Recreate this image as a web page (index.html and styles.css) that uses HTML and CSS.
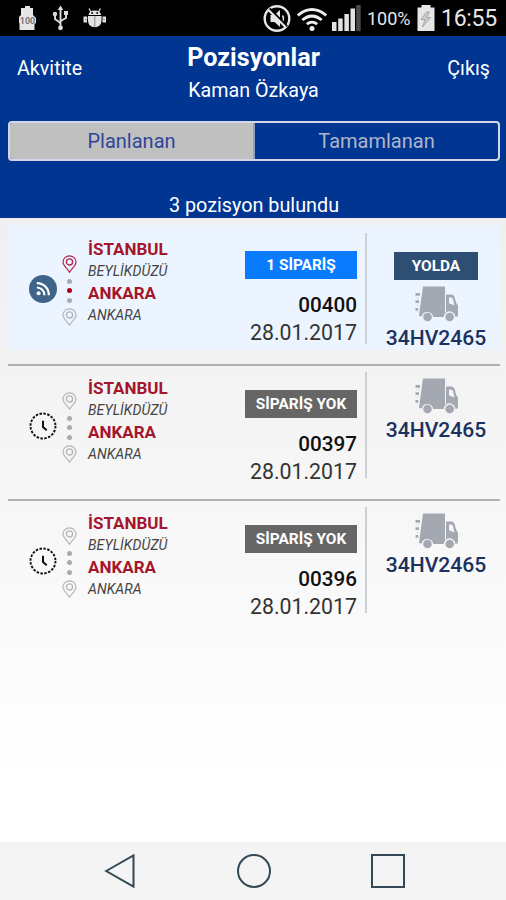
FILE: index.html
```html
<!DOCTYPE html>
<html lang="tr">
  <head>
    <meta charset="UTF-8" />
    <meta name="viewport" content="width=device-width, initial-scale=1.0" />
    <title>Pozisyonlar</title>
    <link rel="stylesheet" href="styles.css">
  </head>
  <body>
    <!-- shared icons -->
    <svg class="defs" width="0" height="0">
      <symbol id="pin" viewBox="0 0 15 18">
        <path d="M7.5 17.2 C5.5 13.5 1 10.8 1 6.9 C1 3.4 3.9 0.9 7.5 0.9 S14 3.4 14 6.9 C14 10.8 9.5 13.5 7.5 17.2 Z" fill="none" stroke="currentColor" stroke-width="1.2" />
        <circle cx="7.5" cy="6.9" r="3.1" fill="none" stroke="currentColor" stroke-width="1.3" />
      </symbol>
      <symbol id="truck" viewBox="0 0 43 36">
        <path d="M8 0.5 H30 V26.5 H31.2 Q28.8 28.5 28.8 31 H18.2 A5.8 5.8 0 0 0 6.8 30.4 L4 30 L5 22 Z" fill="currentColor" />
        <path fill-rule="evenodd" d="M31 8.5 H36.5 Q38.8 8.5 39.6 11 L41.2 17 L43 19.5 V28.5 Q43 31 40.4 31 A5.8 5.8 0 0 0 31 26.6 Z M34 11.5 V17.3 L39.4 19.6 L38 13 Q37.6 11.5 36 11.5 Z" fill="currentColor" />
        <circle cx="12.5" cy="31" r="4.3" fill="currentColor" />
        <circle cx="34.7" cy="31" r="4.3" fill="currentColor" />
        <path d="M0.5 8.3 H5 M0.5 15.6 H4 M0.5 23.3 H3.2" stroke="currentColor" stroke-width="2.8" />
        <path d="M1.5 11.9 H4 M1.5 19.5 H3.5" stroke="currentColor" stroke-width="1" opacity="0.35" />
      </symbol>
      <symbol id="clock" viewBox="0 0 28 28">
        <circle cx="14" cy="14" r="12.5" fill="none" stroke="#111" stroke-width="1.9" stroke-dasharray="2.5 1.427" />
        <path d="M14 8.7 V15 L17.7 18.2" fill="none" stroke="#111" stroke-width="2" />
      </symbol>
    </svg>

    <div class="status-bar">
      <svg class="notifications" width="90" height="36" viewBox="0 0 90 36">
        <path d="M4.5 8 H7 V6 H12 V8 H15 V15 L18 18 V23 L16.5 24 V30 H1.5 V24 L1 22 V17 L3 15 V8 Z" fill="#e6e6e6" />
        <text x="9.5" y="23.5" class="mini" text-anchor="middle">100</text>
        <g fill="none" stroke="#ddd" stroke-width="1.9">
          <path d="M42.5 8 V27" />
          <path d="M37 14 V19 L42.5 23 M48 13 V18 L42.5 21" />
        </g>
        <path d="M42.5 5.5 L45.3 10 H39.7 Z M46 11 H50 V15 H46 Z" fill="#ddd" />
        <circle cx="37" cy="14" r="2.2" fill="#ddd" />
        <circle cx="42.5" cy="27.8" r="2.4" fill="#ddd" />
        <path d="M71 8.5 L73 12 M82.5 8.5 L80.5 12" stroke="#ddd" stroke-width="1.3" />
        <path d="M70.5 15 Q71 10.5 76.8 10.5 T83 15 Z M70 16 H83.5 V21 Q83 27 76.8 27.3 Q70.5 27 70 21 Z M65.5 16.5 H69 V22.5 H65.5 Z M84.5 16.5 H88 V22.5 H84.5 Z" fill="#e2e2e2" />
        <path d="M76.8 16 V27 M70 18 L67 20 M83.5 18 L87 20" stroke="#888" stroke-width="1" />
        <circle cx="74.2" cy="13" r="0.9" fill="#000" />
        <circle cx="79.2" cy="13" r="0.9" fill="#000" />
      </svg>
      <div class="system">
        <svg width="100" height="36" viewBox="0 0 100 36">
          <circle cx="14" cy="18.5" r="12.3" fill="none" stroke="#e6e6e6" stroke-width="2.4" />
          <path d="M7.5 15 H11.5 L17 10 V27 L11.5 22 H7.5 Z" fill="#e6e6e6" />
          <path d="M19.5 15.5 Q21.5 18.5 19.5 21.5" fill="none" stroke="#e6e6e6" stroke-width="1.4" />
          <path d="M6.5 8.5 L24 26.5" stroke="#000" stroke-width="2.5" />
          <path d="M5.2 9.7 L22.7 27.3" stroke="#e6e6e6" stroke-width="2.2" />
          <g fill="none" stroke="#eee" stroke-width="2.8">
            <path d="M34.8 15.3 Q49 3.8 63.2 15.3" />
            <path d="M39.3 20 Q49 12 58.7 20" />
            <path d="M43.8 24.2 Q49 20 54.2 24.2" />
          </g>
          <circle cx="49" cy="28.5" r="2.5" fill="#eee" />
          <path d="M69 22 H73.5 V31 H69 Z M75.2 18.5 H79.7 V31 H75.2 Z M81.4 14 H85.9 V31 H81.4 Z M87.5 8.5 H92 V31 H87.5 Z" fill="#e2e2e2" />
          <path d="M93.2 5 H97.7 V31 H93.2 Z" fill="#4a4a4a" />
        </svg>
        <span class="percent">100%</span>
        <svg width="18" height="36" viewBox="0 0 18 36">
          <path d="M4.5 7.5 V5 H13.5 V7.5 H17.5 V31 H0.5 V7.5 Z" fill="#e6e6e6" />
          <path d="M9.5 12 L4 19.5 H8 L5.5 27 L13.5 17.5 H9.5 L12.5 12 Z" fill="#ccc" stroke="#999" stroke-width="0.8" />
        </svg>
        <span class="time">16:55</span>
      </div>
    </div>

    <header class="header">
      <nav>
        <a class="nav-left" href="#">Akvitite</a>
        <div class="title">
          <h1>Pozisyonlar</h1>
          <p>Kaman Özkaya</p>
        </div>
        <a class="nav-right" href="#">Çıkış</a>
      </nav>
      <div class="tabs">
        <div class="tab active"><span>Planlanan</span></div>
        <div class="tab"><span>Tamamlanan</span></div>
      </div>
      <div class="found"><span>3 pozisyon bulundu</span></div>
    </header>

    <main class="list">
      <section class="row current">
        <svg class="state" width="28" height="28" viewBox="0 0 28 28">
          <circle cx="14" cy="14" r="14" fill="#3f6489" />
          <circle cx="9.6" cy="18.3" r="2" fill="#fff" />
          <path d="M7.8 12.5 A7.5 7.5 0 0 1 15.4 20.2 M7.8 8.1 A11.8 11.8 0 0 1 19.8 20.2" fill="none" stroke="#fff" stroke-width="2.2" />
        </svg>
        <div class="track">
          <svg class="pin red" width="15" height="18"><use href="#pin" /></svg>
          <i class="dot"></i>
          <i class="dot red-dot"></i>
          <i class="dot"></i>
          <svg class="pin" width="15" height="18"><use href="#pin" /></svg>
        </div>
        <div class="route">
          <div class="city"><span>İSTANBUL</span></div>
          <div class="district"><span>BEYLİKDÜZÜ</span></div>
          <div class="city"><span>ANKARA</span></div>
          <div class="district"><span>ANKARA</span></div>
        </div>
        <div class="order">
          <div class="badge blue"><span>1 SİPARİŞ</span></div>
          <div class="number"><span>00400</span></div>
          <div class="date"><span>28.01.2017</span></div>
        </div>
        <div class="vehicle">
          <div class="badge navy"><span>YOLDA</span></div>
          <svg class="truck" width="43" height="36"><use href="#truck" /></svg>
          <div class="plate"><span>34HV2465</span></div>
        </div>
      </section>

      <section class="row">
        <svg class="state" width="28" height="28"><use href="#clock" /></svg>
        <div class="track">
          <svg class="pin" width="15" height="18"><use href="#pin" /></svg>
          <i class="dot"></i>
          <i class="dot"></i>
          <i class="dot"></i>
          <svg class="pin" width="15" height="18"><use href="#pin" /></svg>
        </div>
        <div class="route">
          <div class="city"><span>İSTANBUL</span></div>
          <div class="district"><span>BEYLİKDÜZÜ</span></div>
          <div class="city"><span>ANKARA</span></div>
          <div class="district"><span>ANKARA</span></div>
        </div>
        <div class="order">
          <div class="badge"><span>SİPARİŞ YOK</span></div>
          <div class="number"><span>00397</span></div>
          <div class="date"><span>28.01.2017</span></div>
        </div>
        <div class="vehicle">
          <svg class="truck" width="43" height="36"><use href="#truck" /></svg>
          <div class="plate"><span>34HV2465</span></div>
        </div>
      </section>

      <section class="row">
        <svg class="state" width="28" height="28"><use href="#clock" /></svg>
        <div class="track">
          <svg class="pin" width="15" height="18"><use href="#pin" /></svg>
          <i class="dot"></i>
          <i class="dot"></i>
          <i class="dot"></i>
          <svg class="pin" width="15" height="18"><use href="#pin" /></svg>
        </div>
        <div class="route">
          <div class="city"><span>İSTANBUL</span></div>
          <div class="district"><span>BEYLİKDÜZÜ</span></div>
          <div class="city"><span>ANKARA</span></div>
          <div class="district"><span>ANKARA</span></div>
        </div>
        <div class="order">
          <div class="badge"><span>SİPARİŞ YOK</span></div>
          <div class="number"><span>00396</span></div>
          <div class="date"><span>28.01.2017</span></div>
        </div>
        <div class="vehicle">
          <svg class="truck" width="43" height="36"><use href="#truck" /></svg>
          <div class="plate"><span>34HV2465</span></div>
        </div>
      </section>
    </main>

    <footer class="nav-bar">
      <svg width="34" height="34" viewBox="0 0 34 34"><path d="M3.2 17 L30.5 1.4 V32.6 Z" /></svg>
      <svg width="34" height="34" viewBox="0 0 34 34"><circle cx="17" cy="17" r="16" /></svg>
      <svg width="34" height="34" viewBox="0 0 34 34"><rect x="1" y="1" width="32" height="32" /></svg>
    </footer>
  </body>
</html>
```

FILE: styles.css
```css
* {
  box-sizing: border-box;
}

body {
  margin: 0;
  width: 506px;
  height: 900px;
  display: flex;
  flex-direction: column;
  overflow: hidden;
  font-family: Roboto, "Liberation Sans", sans-serif;
  background-color: #fff;
  color: #222;
}

svg {
  display: block;
  flex: none;
}

.defs {
  position: absolute;
}

/* Android status bar */
.status-bar {
  height: 36px;
  flex: none;
  display: flex;
  justify-content: space-between;
  background-color: #000;
  color: #e6e6e6;
  padding: 0 9px 0 18px;
}

.mini {
  font-size: 9px;
  font-weight: bold;
  fill: #777;
}

.system {
  display: flex;
  line-height: 37px;
}

.percent {
  font-size: 18px;
  width: 44px;
  margin: 0 6px 0 4px;
}

.time {
  font-size: 23px;
  line-height: 38px;
  letter-spacing: -0.3px;
  width: 56px;
  margin-left: 6px;
  white-space: nowrap;
}

/* Header */
.header {
  height: 182px;
  flex: none;
  background-color: #003591;
  color: #fff;
  padding: 0 6px 0 8px;
}

nav {
  height: 85px;
  display: grid;
  grid-template-columns: 1fr auto 1fr;
  padding: 0 10px 0 9px;
}

nav a {
  color: #fff;
  text-decoration: none;
  font-size: 19.7px;
  line-height: 24px;
  margin-top: 21px;
}

.nav-right {
  text-align: right;
}

.title {
  text-align: center;
}

.title h1 {
  margin: 8px 0 0;
  font-size: 25.2px;
  line-height: 28px;
  font-weight: bold;
}

.title p {
  margin: 7px 0 0;
  font-size: 19.7px;
  line-height: 24px;
}

.tabs {
  display: flex;
  height: 40px;
  border: 2px solid #d3d6e6;
  border-radius: 4px;
  overflow: hidden;
}

.tab {
  flex: 1;
  text-align: center;
  font-size: 20px;
  line-height: 37px;
  color: #aeb6cb;
}

.tab.active {
  background-color: #c0c0c0;
  color: #2e4799;
  border-right: 2px solid #8f9fc4;
}

.found {
  margin-top: 33px;
  text-align: center;
  font-size: 19.8px;
  line-height: 24px;
}

/* Position list */
.list {
  flex: 1;
  padding: 7px 6px 0 8px;
  background: linear-gradient(#efefef, #f5f5f5 35%, #fafafa 65%, #fff 90%);
}

.row {
  display: flex;
  align-items: flex-start;
  height: 135px;
  border-top: 2px solid #b0b0b0;
  padding-left: 21px;
}

.row.current {
  height: 125px;
  margin-bottom: 14px;
  border-top: none;
  padding-top: 2px;
  background-color: #ecf5ff;
}

.state {
  margin-top: 46px;
}

.track {
  width: 15px;
  margin: 26px 0 0 5px;
  display: flex;
  flex-direction: column;
  align-items: center;
}

.current .state {
  margin-top: 48px;
}

.current .track {
  margin-top: 28px;
}

.pin {
  color: #b4b6ba;
}

.pin.red {
  color: #b0284c;
}

.dot {
  width: 5px;
  height: 5px;
  border-radius: 50%;
  background-color: #a9abb0;
  margin-bottom: 4.5px;
}

.pin + .dot {
  margin-top: 5.5px;
}

.dot + .pin {
  margin-top: 1px;
}

.red-dot {
  background-color: #b0001c;
}

.route {
  width: 156px;
  margin: 11px 0 0 11px;
  white-space: nowrap;
}

.city {
  font-size: 17px;
  line-height: 23px;
  font-weight: bold;
  color: #a5152b;
}

.district {
  font-size: 14px;
  line-height: 21px;
  font-style: italic;
  letter-spacing: 0.1px;
  color: #444;
}

.order {
  width: 112px;
  margin: 24px 8px 0 1px;
  text-align: right;
}

.badge {
  height: 28px;
  line-height: 29px;
  background-color: #666;
  color: #fff;
  font-size: 15.4px;
  font-weight: bold;
  text-align: center;
}

.blue {
  background-color: #087bff;
}

.navy {
  width: 84px;
  background-color: #2d4f73;
  margin-bottom: 6px;
}

.number {
  margin-top: 13px;
  font-size: 20.7px;
  line-height: 26px;
  font-weight: 500;
  color: #111;
}

.date {
  font-size: 21.3px;
  line-height: 30px;
  color: #333;
}

.vehicle {
  flex: 1;
  height: 106px;
  margin-top: 6px;
  border-left: 2px solid #ccd0d5;
  padding: 6px 0 0 5px;
  display: flex;
  flex-direction: column;
  align-items: center;
}

.current .vehicle {
  height: 111px;
  padding-top: 19px;
}

.truck {
  color: #a4a8b1;
}

.plate {
  margin-top: 3px;
  font-size: 21.1px;
  line-height: 26px;
  font-weight: 500;
  color: #1b315f;
}

/* Android navigation buttons */
.nav-bar {
  height: 58px;
  flex: none;
  display: flex;
  justify-content: center;
  gap: 100px;
  padding: 12px 0 0 1px;
  background-color: #f4f4f4;
}

.nav-bar svg {
  fill: none;
  stroke: #344955;
  stroke-width: 2;
}
```
